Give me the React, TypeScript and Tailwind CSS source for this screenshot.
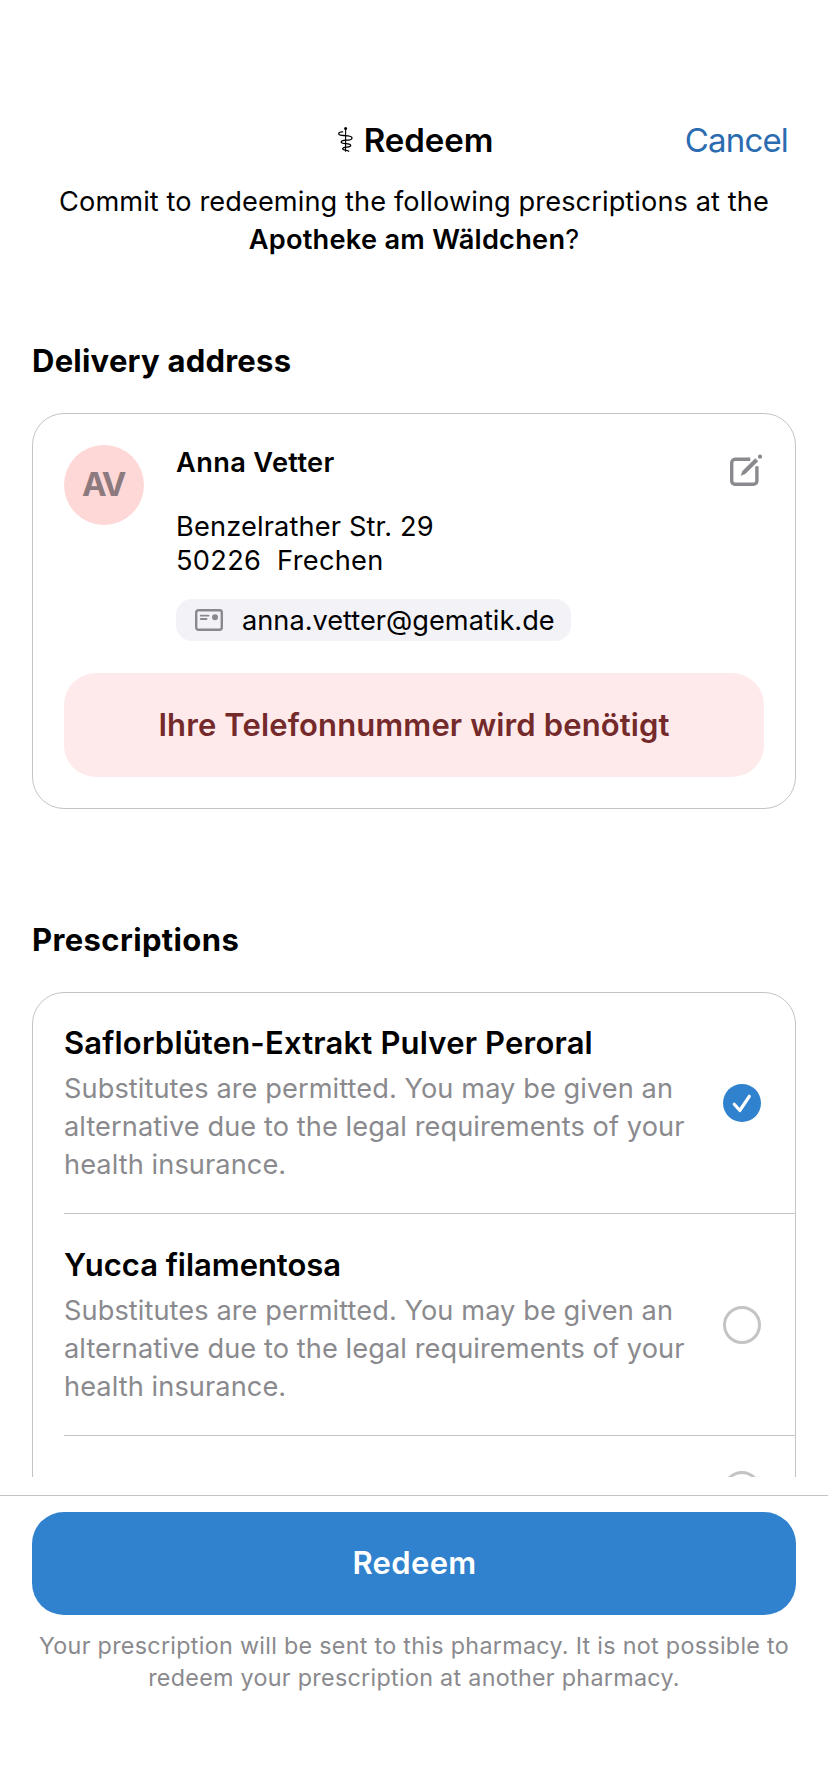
type Prescription = {
  title: string;
  titleTracking: string;
  substitutable: boolean;
  selected: boolean;
};

const prescriptions: Prescription[] = [
  { title: "Saflorblüten-Extrakt Pulver Peroral", titleTracking: "tracking-[0.18px]", substitutable: true, selected: true },
  { title: "Yucca filamentosa", titleTracking: "tracking-[-0.04px]", substitutable: true, selected: false },
  { title: "Propranolol", titleTracking: "tracking-[0.45px]", substitutable: false, selected: false },
];

function StaffIcon() {
  return (
    <svg className="mb-[1px] h-[25px] w-[15px]" viewBox="0 0 15 25" fill="none" stroke="#000" strokeLinecap="round">
      <circle cx="7.6" cy="1.6" r="1.5" fill="#000" stroke="none" />
      <path d="M7.6 2v22.3" strokeWidth="1.1" />
      <path
        d="M4.6 4.9C2.6 4.7.7 5.5.7 6.7c0 1.6 2.6 1.7 5.4 1.8 3.7.2 7.9.3 7.9 2.4 0 1.9-3 2.2-6 2.3-2.6.1-4.8.5-4.8 1.8 0 1.3 2.2 1.5 4.6 1.6 2.7.1 4.9.4 4.9 1.9 0 1.4-2.3 1.5-4.3 1.7-1.9.2-3.7.5-3.7 1.6 0 1.2 2 1.3 3.6 1.5 1 .1 2.1.4 2.4 1"
        strokeWidth="1.3"
      />
    </svg>
  );
}

function EditIcon() {
  return (
    <svg className="h-[33px] w-[34px]" viewBox="0 0 34 33" fill="none" stroke="#8a8a8e">
      <path d="M21.3 5.3H6A3.4 3.4 0 0 0 2.7 8.7V27A3.4 3.4 0 0 0 6 30.3H24.5A3.4 3.4 0 0 0 27.9 27V12.3" strokeWidth="3.4" />
      <path d="M12 21.4L13.6 17L26.2 4.5L29 7.3L16.3 19.7Z" fill="#8a8a8e" stroke="#8a8a8e" strokeWidth="0.4" strokeLinejoin="round" />
      <circle cx="31" cy="2.7" r="2.1" fill="#8a8a8e" stroke="none" />
    </svg>
  );
}

function CardIcon() {
  return (
    <svg className="h-[22px] w-[28px]" viewBox="0 0 28 22" fill="none" stroke="#8a8a8e">
      <rect x="1.2" y="1.2" width="25.6" height="19.6" rx="2.2" strokeWidth="2.4" />
      <path d="M5.8 6.7H13.5M5.8 10H11.5" strokeWidth="1.8" strokeLinecap="round" />
      <circle cx="20" cy="8.2" r="3" fill="#8a8a8e" stroke="none" />
    </svg>
  );
}

function SelectionMark({ selected }: { selected: boolean }) {
  return (
    <svg className="mr-[34px] mb-[2px] h-[38px] w-[38px] shrink-0" viewBox="0 0 38 38" fill="none">
      {selected ? (
        <>
          <circle cx="19" cy="19" r="19" fill="#3182ce" />
          <path d="M11.3 20.3L16.8 26.5L26.3 12.3" stroke="#fff" strokeWidth="3.2" strokeLinecap="round" strokeLinejoin="round" />
        </>
      ) : (
        <circle cx="19" cy="19" r="17.5" stroke="#c4c4c6" strokeWidth="3" />
      )}
    </svg>
  );
}

function PrescriptionRow({ title, titleTracking, substitutable, selected }: Prescription) {
  return (
    <li className="ml-[31px] flex items-center justify-between border-b border-[#c4c4c6] pt-8 pb-[29px]">
      {substitutable ? (
        <div>
          <h3 className={`text-[31px] leading-[37px] font-semibold whitespace-nowrap ${titleTracking}`}>{title}</h3>
          <p className="mt-[9px] w-[630px] text-[27.2px] leading-[38px] tracking-[0.08px] text-[#8a8a8e]">
            Substitutes are permitted. You may be given an
            <br />
            alternative due to the legal requirements of your
            <br />
            health insurance.
          </p>
        </div>
      ) : (
        <h3 className={`pt-[2px] pb-[8px] text-[30px] leading-[36px] font-semibold ${titleTracking}`}>{title}</h3>
      )}
      <SelectionMark selected={selected} />
    </li>
  );
}

export default function App() {
  return (
    <div className="h-[1792px] w-[828px] overflow-hidden bg-white font-['Inter','Liberation_Sans',sans-serif] text-black">
      <div className="h-[1477px] overflow-hidden px-8 pt-[120px]">
        <header className="grid h-10 grid-cols-[1fr_auto_1fr] items-center">
          <h1 className="col-start-2 flex items-center gap-[11px] pl-[3px] text-[33px] leading-10 font-semibold tracking-[-0.05px]">
            <StaffIcon />
            Redeem
          </h1>
          <button className="justify-self-end pr-[8px] text-[33px] leading-10 tracking-[-0.84px] text-[#2b6cb0]">Cancel</button>
        </header>

        <p className="mt-[23px] text-center text-[27.2px] leading-[38px] tracking-[0.09px]">
          Commit to redeeming the following prescriptions at the
          <br />
          <strong className="font-semibold tracking-[0.26px]">Apotheke am Wäldchen</strong>?
        </p>

        <h2 className="mt-[83px] text-[31px] leading-[37px] font-bold tracking-[0.24px]">Delivery address</h2>
        <section className="mt-[34px] rounded-[32px] border border-[#c4c4c6] p-[31px]">
          <div className="flex gap-8">
            <div className="flex size-20 shrink-0 items-center justify-center rounded-full bg-[#fed7d7] pr-[2px] pb-[2px] text-[33px] leading-10 font-bold tracking-[-2.4px] text-[#8c7a7e]">
              AV
            </div>
            <div className="flex-1 pt-[1px]">
              <h3 className="text-[27.2px] leading-[33px] font-semibold tracking-[0.36px]">Anna Vetter</h3>
              <address className="mt-[31px] text-[27.2px] leading-[34px] whitespace-pre not-italic">
                <div className="tracking-[0.15px]">Benzelrather Str. 29</div>
                <div className="tracking-[0.3px]">{"50226  Frechen"}</div>
              </address>
              <div className="mt-[21px] flex h-[42px] w-[395px] items-center gap-[19px] rounded-2xl bg-[#f2f2f7] pl-[19px]">
                <CardIcon />
                <span className="text-[27.2px] leading-[33px]">anna.vetter@gematik.de</span>
              </div>
            </div>
            <button className="mr-[1px] self-start pt-[9px]" aria-label="Edit">
              <EditIcon />
            </button>
          </div>
          <div className="mt-8 flex h-[104px] items-center justify-center rounded-[32px] bg-[#ffeaeb] pb-[2px] text-[31px] leading-[37px] font-semibold tracking-[0.12px] text-[#742a2a]">
            Ihre Telefonnummer wird benötigt
          </div>
        </section>

        <h2 className="mt-[112px] text-[31px] leading-[37px] font-bold tracking-[0.38px]">Prescriptions</h2>
        <section className="mt-[34px] rounded-[32px] border border-[#c4c4c6]">
          <ul className="-mt-px">
            {prescriptions.map((item) => (
              <PrescriptionRow key={item.title} {...item} />
            ))}
          </ul>
        </section>
      </div>

      <footer className="mt-[18px] border-t border-[#c4c4c6] px-8 pt-4">
        <button className="flex h-[103px] w-full items-center justify-center rounded-[32px] bg-[#3182ce] pb-[2px] pl-[1px] text-[31px] leading-[37px] font-semibold tracking-[0.35px] text-white">
          Redeem
        </button>
        <p className="mt-[15px] text-center text-[23.3px] leading-8 tracking-[0.3px] text-[#8a8a8e]">
          Your prescription will be sent to this pharmacy. It is not possible to
          <br />
          redeem your prescription at another pharmacy.
        </p>
      </footer>
    </div>
  );
}
